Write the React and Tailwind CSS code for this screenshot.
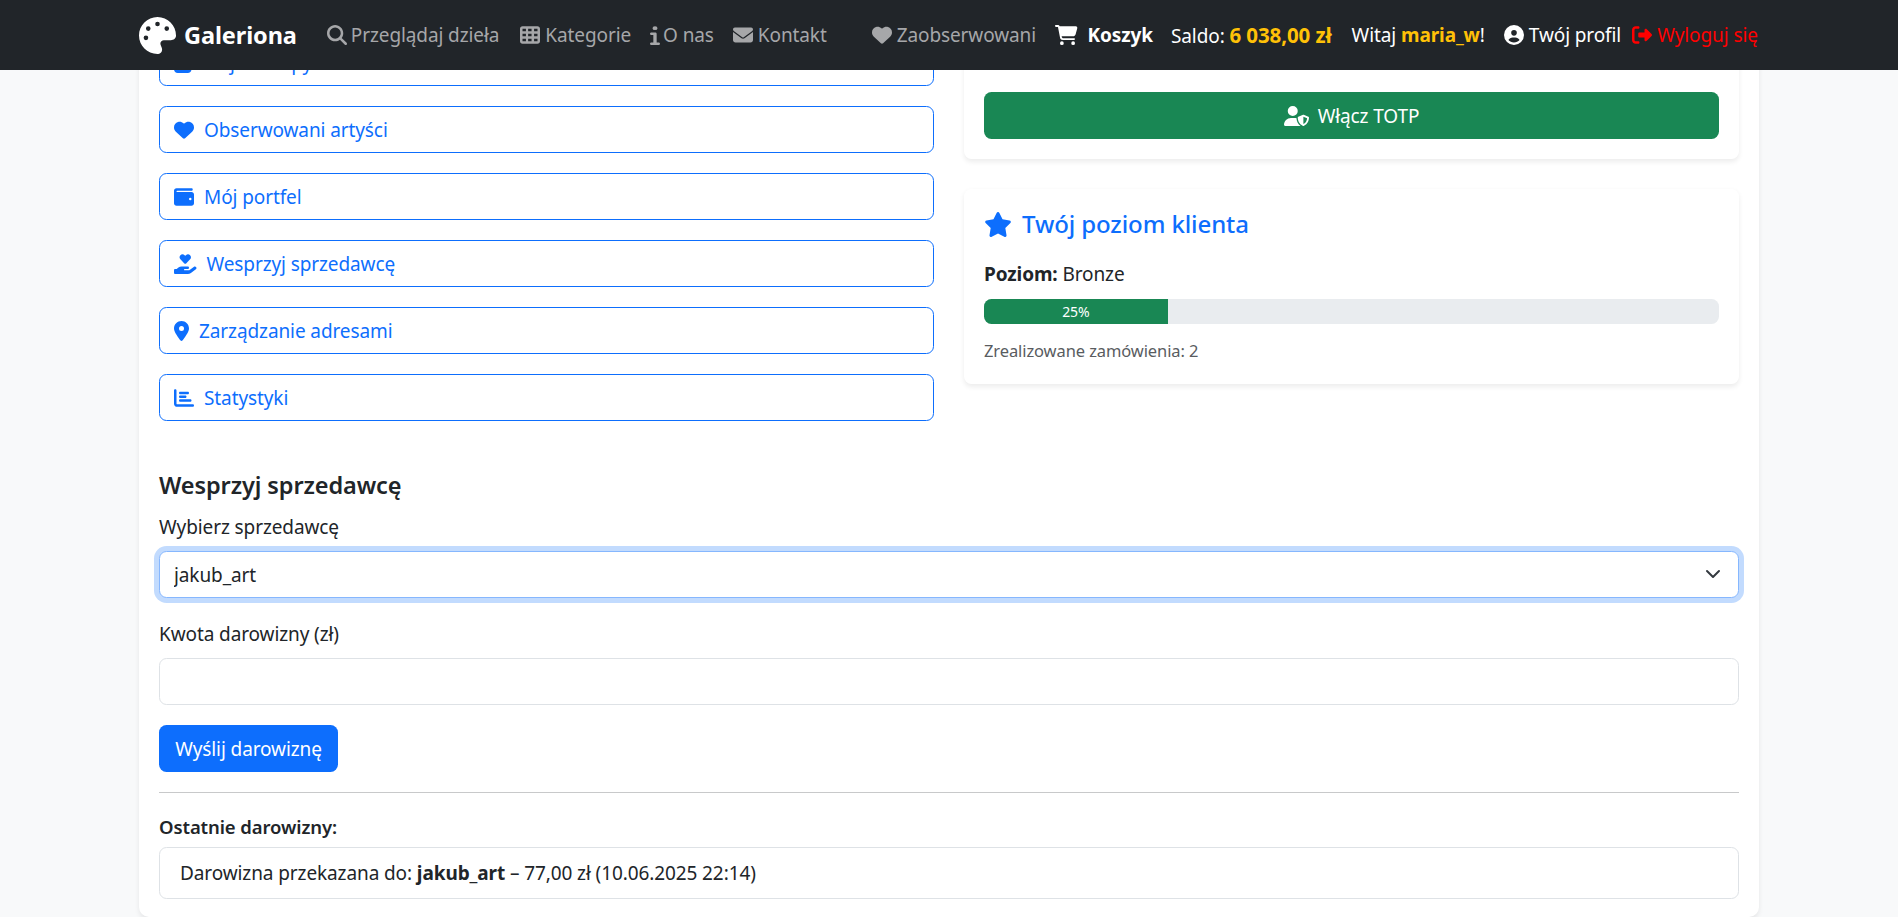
import React from "react";
import {
  FaPalette,
  FaMagnifyingGlass,
  FaTableCells,
  FaInfo,
  FaEnvelope,
  FaHeart,
  FaCartShopping,
  FaCircleUser,
  FaRightFromBracket,
  FaBagShopping,
  FaWallet,
  FaHandHoldingHeart,
  FaLocationDot,
  FaChartBar,
  FaUserShield,
  FaStar,
} from "react-icons/fa6";

const menu = [
  { label: "Moje zakupy", icon: <FaBagShopping className="h-5 w-[17.5px]" /> },
  { label: "Obserwowani artyści", icon: <FaHeart className="h-5 w-5" /> },
  { label: "Mój portfel", icon: <FaWallet className="h-5 w-5" /> },
  { label: "Wesprzyj sprzedawcę", icon: <FaHandHoldingHeart className="h-5 w-[22.5px]" /> },
  { label: "Zarządzanie adresami", icon: <FaLocationDot className="h-5 w-[15px]" /> },
  { label: "Statystyki", icon: <FaChartBar className="h-5 w-5" /> },
];

const NavLink = ({ icon, children, className = "" }) => (
  <a className={`flex items-center text-[#a6a7a9] ${className}`}>
    {icon}
    <span>{children}</span>
  </a>
);

const App = () => {
  return (
    <div className="h-[917px] overflow-hidden bg-[#f8f9fa] text-[19px] leading-[30px] tracking-[-0.1px] text-[#212529] font-['Noto_Sans',sans-serif]">
      {/* ===== NAVBAR ===== */}
      <nav className="fixed top-0 left-0 right-0 z-10 h-[70px] bg-[#212529]">
        <div className="mx-auto flex h-full w-[1620px] items-center whitespace-nowrap">
          <a className="flex items-center gap-[8px] text-[23.5px] font-bold text-white">
            <FaPalette className="h-[37px] w-[37px]" />
            <span>Galeriona</span>
          </a>
          <NavLink className="ml-[30px] gap-[4px]" icon={<FaMagnifyingGlass className="h-5 w-5" />}>Przeglądaj dzieła</NavLink>
          <NavLink className="ml-[21px] gap-[5px]" icon={<FaTableCells className="h-5 w-5" />}>Kategorie</NavLink>
          <NavLink className="ml-[19px] gap-[3px]" icon={<FaInfo className="h-5 w-[10px]" preserveAspectRatio="none" />}>O nas</NavLink>
          <NavLink className="ml-[19px] gap-[5px]" icon={<FaEnvelope className="h-5 w-5" />}>Kontakt</NavLink>

          <NavLink className="ml-[45px] gap-[5px]" icon={<FaHeart className="h-5 w-5" />}>Zaobserwowani</NavLink>
          <a className="ml-[19px] flex items-center gap-[10px] font-bold text-white">
            <FaCartShopping className="h-5 w-[22.5px]" />
            <span>Koszyk</span>
          </a>
          <span className="ml-[18px] text-white">
            Saldo: <b className="text-[20.5px] text-[#ffc107]">6 038,00 zł</b>
          </span>
          <span className="ml-[20px] text-white">
            Witaj <b className="text-[#ffc107]">maria_w</b>!
          </span>
          <a className="ml-[19px] flex items-center gap-[5px] text-white">
            <FaCircleUser className="h-5 w-5" />
            <span>Twój profil</span>
          </a>
          <a className="ml-[11px] flex items-center gap-[5px] text-[#ff0000]">
            <FaRightFromBracket className="h-5 w-5" />
            <span>Wyloguj się</span>
          </a>
        </div>
      </nav>

      {/* ===== PAGE CARD ===== */}
      <main className="mx-auto w-[1620px] rounded-[10px] bg-white px-5 pt-[39px] pb-[18px] shadow-[0_2.5px_5px_rgba(0,0,0,0.075)]">
        <div className="grid grid-cols-2 gap-x-[30px]">
          {/* LEFT - menu */}
          <div className="flex flex-col gap-5">
            {menu.map((item) => (
              <a
                key={item.label}
                className="flex h-[47px] items-center gap-[10px] rounded-[7.5px] border border-[#0d6efd] pl-[14px] pt-px text-[#0d6efd]"
              >
                {item.icon}
                <span>{item.label}</span>
              </a>
            ))}
          </div>

          {/* RIGHT - cards */}
          <div>
            <div className="rounded-[7.5px] bg-white px-5 pt-[53px] pb-5 shadow-[0_2.5px_5px_rgba(0,0,0,0.075)]">
              <button className="flex h-[47px] w-full items-center justify-center gap-[9px] rounded-[7.5px] bg-[#198754] text-white">
                <FaUserShield className="h-5 w-[25px]" />
                Włącz TOTP
              </button>
            </div>
            <div className="mt-[30px] rounded-[7.5px] bg-white p-5 shadow-[0_2.5px_5px_rgba(0,0,0,0.075)]">
              <h5 className="flex items-center gap-[10px] text-[24px] leading-[30px] font-medium text-[#0d6efd]">
                <FaStar className="h-[25px] w-[28px]" />
                Twój poziom klienta
              </h5>
              <p className="mt-5 mb-[10px]">
                <b>Poziom:</b> Bronze
              </p>
              <div className="h-[25px] overflow-hidden rounded-[7.5px] bg-[#e9ecef]">
                <div className="flex h-full w-1/4 items-center justify-center bg-[#198754] text-[14px] text-white">
                  25%
                </div>
              </div>
              <p className="mt-[14px] text-[16.5px] leading-[26px] text-[#595c5f]">
                Zrealizowane zamówienia: 2
              </p>
            </div>
          </div>
        </div>

        {/* ===== SUPPORT FORM ===== */}
        <h4 className="mt-[46px] mb-[8px] text-[23.5px] leading-[36px] font-semibold">Wesprzyj sprzedawcę</h4>
        <label className="mb-[9px] block pt-px">Wybierz sprzedawcę</label>
        <div className="relative mb-5">
          <select className="h-[47px] w-full appearance-none rounded-[7.5px] border border-[#86b7fe] bg-white pl-[14px] shadow-[0_0_0_5px_rgba(13,110,253,0.25)] outline-none">
            <option>jakub_art</option>
          </select>
          <svg viewBox="0 0 16 16" className="pointer-events-none absolute top-[15px] right-[18px] h-4 w-4" fill="none">
            <path d="m2 5 6 6 6-6" stroke="#343a40" strokeWidth="2" strokeLinecap="round" strokeLinejoin="round" />
          </svg>
        </div>
        <label className="mb-[9px] block pt-px">Kwota darowizny (zł)</label>
        <input type="number" className="mb-5 block h-[47px] w-full rounded-[7.5px] border border-[#dee2e6] bg-white outline-none" />
        <button className="h-[47px] w-[179px] rounded-[7.5px] bg-[#0d6efd] text-white">Wyślij darowiznę</button>
        <hr className="mt-5 mb-[19px] border-[#c8c9ca]" />
        <p className="mb-[5px] text-[18.5px] font-semibold">Ostatnie darowizny:</p>
        <div className="h-[52px] rounded-[7.5px] border border-[#dee2e6] px-5 py-[10px]">
          Darowizna przekazana do: <b>jakub_art</b> – 77,00 zł (10.06.2025 22:14)
        </div>
      </main>
    </div>
  );
};

export default App;
